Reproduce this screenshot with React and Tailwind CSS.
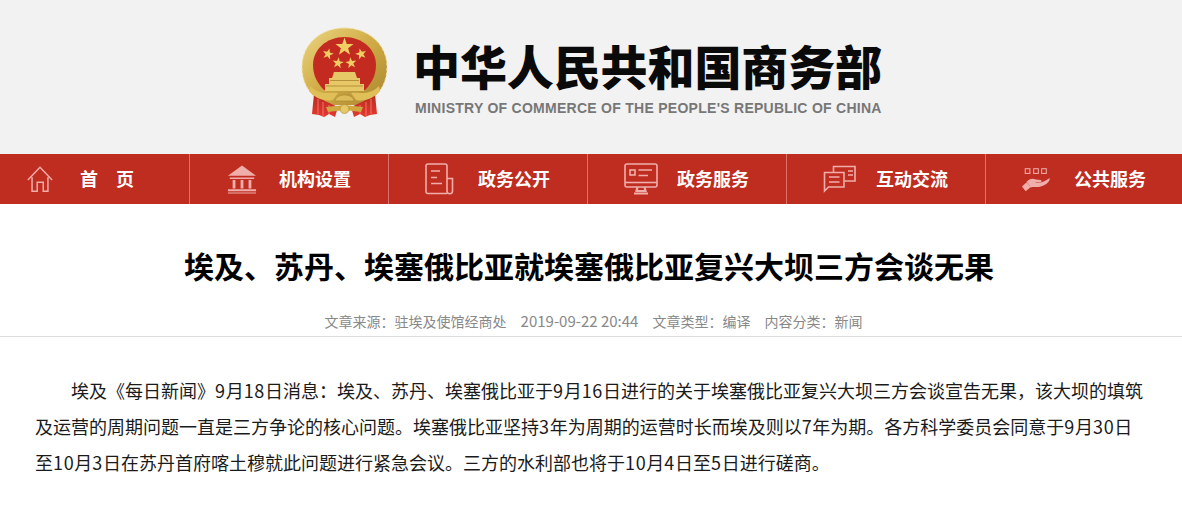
const cjk = "font-['Noto_Sans_CJK_SC','Liberation_Sans',sans-serif]";

function Star({ x, y, r, rot = 0 }) {
  const pts = [];
  for (let i = 0; i < 10; i++) {
    const a = (Math.PI / 5) * i - Math.PI / 2 + rot;
    const rr = i % 2 === 0 ? r : r * 0.4;
    pts.push(`${(x + rr * Math.cos(a)).toFixed(2)},${(y + rr * Math.sin(a)).toFixed(2)}`);
  }
  return <polygon points={pts.join(" ")} fill="#efcf63" />;
}

function Emblem() {
  return (
    <svg width="90" height="105" viewBox="0 0 90 105" className="shrink-0">
      <defs>
        <linearGradient id="gold" x1="0" y1="0" x2="1" y2="1">
          <stop offset="0" stopColor="#ecd684" />
          <stop offset="0.5" stopColor="#d0ab45" />
          <stop offset="1" stopColor="#a98530" />
        </linearGradient>
        <linearGradient id="rib" x1="0" y1="0" x2="0" y2="1">
          <stop offset="0" stopColor="#b92a20" />
          <stop offset="1" stopColor="#e4392f" />
        </linearGradient>
      </defs>
      <path d="M44.5 8 C68 8 87 24 87 47 C87 60 82 70 74 77 L62 85 L27 85 L15 77 C7 70 2 60 2 47 C2 24 21 8 44.5 8 Z" fill="url(#gold)" />
      <path d="M44.5 8 C68 8 87 24 87 47 C87 60 82 70 75 76 M44.5 8 C21 8 2 24 2 47 C2 60 7 70 14 76" fill="none" stroke="#f1e0a0" strokeWidth="1" strokeDasharray="3 2" />
      <path d="M14 74 L12 94 L19 95 L24 97 L29 94 L35 97 L38 87 L25 81 Z M75 74 L77 94 L70 95 L65 97 L60 94 L54 97 L51 87 L64 81 Z" fill="url(#rib)" />
      <path d="M18 79 V94 M23 82 V96 M29 85 V94 M71 79 V94 M66 82 V96 M60 85 V94" stroke="#f3756a" strokeWidth="1" />
      <path d="M44.5 17 C62 17 76 29 76 45 C76 56 71 64 65 70 L24 70 C18 64 13 56 13 45 C13 29 27 17 44.5 17 Z" fill="#c42b20" />
      <Star x={44.5} y={27} r={9.5} />
      <Star x={28} y={34} r={5.8} rot={0.25} />
      <Star x={61} y={34} r={5.8} rot={-0.25} />
      <Star x={38} y={43} r={5.8} rot={0.15} />
      <Star x={51} y={43} r={5.8} rot={-0.15} />
      <path d="M34 52 H55 L57 58 H60 V64 H64 V71 H25 V64 H29 V58 H32 Z" fill="#e6c866" />
      <path d="M30 60.5 H59 M26 66 H63" stroke="#a8842d" strokeWidth="0.8" />
      <path d="M10 66 C20 76 30 72 38 73 L33 80 C24 82 15 78 9 71 Z M79 66 C69 76 59 72 51 73 L56 80 C65 82 74 78 80 71 Z" fill="#e0bf58" />
      <path d="M35 81 C36 73 53 73 54 81 Z" fill="#dcbc58" stroke="#a8842d" strokeWidth="0.6" />
      <path d="M26 87 L44.5 85 L63 87 L61 92 L44.5 90 L28 92 Z" fill="#cfa940" />
      <circle cx="44.5" cy="89" r="4.5" fill="#e6c866" stroke="#a8842d" strokeWidth="0.6" />
    </svg>
  );
}

const ic = { fill: "none", stroke: "#f0aeaa", strokeWidth: 1.6 };

const HomeIcon = () => (
  <svg width="28" height="30" viewBox="0 0 30 30" {...ic}>
    <path d="M2 16 L15 2.5 L28 16 M6.5 13 V28 H12 V18.5 H18.5 V28 H23.5 V13" />
  </svg>
);
const BankIcon = () => (
  <svg width="30" height="32" viewBox="0 0 32 32">
    <path d="M16 1.5 L31 12.5 H1 Z" fill="#f0aeaa" />
    <path d="M3 14.5 H29 V16 H3 Z M1 27 H31 V29 H1 Z M1 30.5 H31 V31.5 H1 Z" fill="#f0aeaa" />
    <path d="M6 17 H9 V26 H6 Z M14.5 17 H17.5 V26 H14.5 Z M23 17 H26 V26 H23 Z" fill="#f0aeaa" />
  </svg>
);
const DocIcon = () => (
  <svg width="30" height="32" viewBox="0 0 30 32" {...ic}>
    <path d="M22 30.5 H3 A2 2 0 0 1 1 28.5 V3 A2 2 0 0 1 3 1 H20 A2 2 0 0 1 22 3 V28 A2.5 2.5 0 0 0 27.5 28 V15.5 H22" />
    <path d="M6 8 H15 M6 14.5 H12 M6 20.5 H17" />
  </svg>
);
const ScreenIcon = () => (
  <svg width="34" height="32" viewBox="0 0 34 32" {...ic}>
    <rect x="1" y="1" width="32" height="23" rx="2" />
    <path d="M1 19.5 H33" />
    <rect x="6" y="7" width="5" height="5" />
    <path d="M14.5 7 H28 M14.5 12.5 H24" />
    <path d="M13.5 24 L12.5 28 H21.5 L20.5 24 M10 30.5 H24" strokeWidth="2.2" />
  </svg>
);
const ChatIcon = () => (
  <svg width="33" height="28" viewBox="0 0 33 28" {...ic}>
    <path d="M1.5 26 V7.5 H21 V22 H5.5 Z" />
    <path d="M6 12 H16.5 M6 17 H16.5" />
    <path d="M10.5 7 V1.5 H32 V16 H21.5" />
    <path d="M25 6 H30 M25 10 H30" />
  </svg>
);
const HandIcon = () => (
  <svg width="30" height="25" viewBox="0 0 32 25">
    <rect x="4.5" y="1" width="5" height="5" fill="none" stroke="#f0aeaa" strokeWidth="1.1" />
    <rect x="13.5" y="1" width="5" height="5" fill="none" stroke="#f0aeaa" strokeWidth="1.1" />
    <rect x="22" y="1" width="5" height="5" fill="none" stroke="#f0aeaa" strokeWidth="1.1" />
    <path d="M6 15 C9 11 13 11 16 12.5 L21 13 C22.5 13.5 22 15.5 20.5 15.5 L15 15.5 C19 17 25 15.5 30.5 11 C31.5 15 25 20 19 20.5 C15 20.7 13 20 10.5 21 Z" fill="#f0aeaa" />
    <path d="M1 20 L6 15.5 L10.5 20.5 L5 25 Z" fill="#f0aeaa" />
  </svg>
);

const nav = [
  ["首 页", HomeIcon, "w-[189px]", "pl-[23px]", "ml-[23px]", "w-[54px] justify-between"],
  ["机构设置", BankIcon, "w-[199px]", "pl-[35px]", "ml-[20px]", ""],
  ["政务公开", DocIcon, "w-[199px]", "pl-[34px]", "ml-[21px]", ""],
  ["政务服务", ScreenIcon, "w-[199px]", "pl-[36px]", "ml-[19px]", ""],
  ["互动交流", ChatIcon, "w-[199px]", "pl-[35px]", "ml-[20px]", ""],
  ["公共服务", HandIcon, "w-[197px]", "pl-[33px]", "ml-[21px]", ""],
];

const lines = [
  "埃及《每日新闻》9月18日消息：埃及、苏丹、埃塞俄比亚于9月16日进行的关于埃塞俄比亚复兴大坝三方会谈宣告无果，该大坝的填筑",
  "及运营的周期问题一直是三方争论的核心问题。埃塞俄比亚坚持3年为周期的运营时长而埃及则以7年为期。各方科学委员会同意于9月30日",
  "至10月3日在苏丹首府喀土穆就此问题进行紧急会议。三方的水利部也将于10月4日至5日进行磋商。",
];

export default function App() {
  return (
    <div className={`w-[1182px] h-[516px] overflow-hidden bg-white ${cjk}`}>
      <header className="h-[154px] bg-[#f2f2f2] flex items-start pt-[20px] pl-[300px]">
        <Emblem />
        <div className="ml-[24px] pt-[15px] flex flex-col">
          <div className="-ml-[1px] text-[47px] leading-[60px] font-black text-[#0a0a0a] tracking-[-0.1px] whitespace-nowrap">
            中华人民共和国商务部
          </div>
          <div className="mt-[5px] ml-[1px] text-[14px] leading-[16px] font-['Liberation_Sans',sans-serif] font-bold text-[#777777] tracking-[0.27px] whitespace-nowrap">
            MINISTRY OF COMMERCE OF THE PEOPLE'S REPUBLIC OF CHINA
          </div>
        </div>
      </header>

      <nav className="h-[50px] bg-[#bf2c20] flex">
        {nav.map(([label, Icon, w, pl, ml, extra], i) => (
          <div
            key={label}
            className={`${w} ${pl} h-full flex items-center text-white ${i > 0 ? "border-l border-[#d9736b]" : ""}`}
          >
            <span className="w-[34px] flex justify-center shrink-0"><Icon /></span>
            <span className={`${ml} mb-[2px] text-[18px] font-bold leading-[24px] whitespace-nowrap flex ${extra}`}>
              {i === 0 ? (<><span>首</span><span>页</span></>) : label}
            </span>
          </div>
        ))}
      </nav>

      <h1 className="mt-[42px] pr-[4px] text-center text-[30px] leading-[38px] font-bold text-black whitespace-nowrap">
        埃及、苏丹、埃塞俄比亚就埃塞俄比亚复兴大坝三方会谈无果
      </h1>

      <div className="mt-[27px] h-[26px] pl-[5px] border-b border-[#dddddd] flex justify-center text-[14px] leading-[20px] text-[#888888] whitespace-nowrap">
        <span>文章来源：驻埃及使馆经商处</span>
        <span className="ml-[14px] text-[15px]">2019-09-22 20:44</span>
        <span className="ml-[14px]">文章类型：编译</span>
        <span className="ml-[14px]">内容分类：新闻</span>
      </div>

      <div className="mt-[35px] ml-[35px] mr-[37px] text-[18px] leading-[36px] text-[#1a1a1a]">
        {lines.map((line, n) => (
          <div key={n} className={`whitespace-nowrap ${n === 0 ? "pl-[36px]" : ""}`}>
            {line.split(/(\d+)/).map((part, i) =>
              /^\d+$/.test(part) ? (
                <span key={i} className="tracking-[0.67px]">{part}</span>
              ) : (
                part
              )
            )}
          </div>
        ))}
      </div>
    </div>
  );
}
